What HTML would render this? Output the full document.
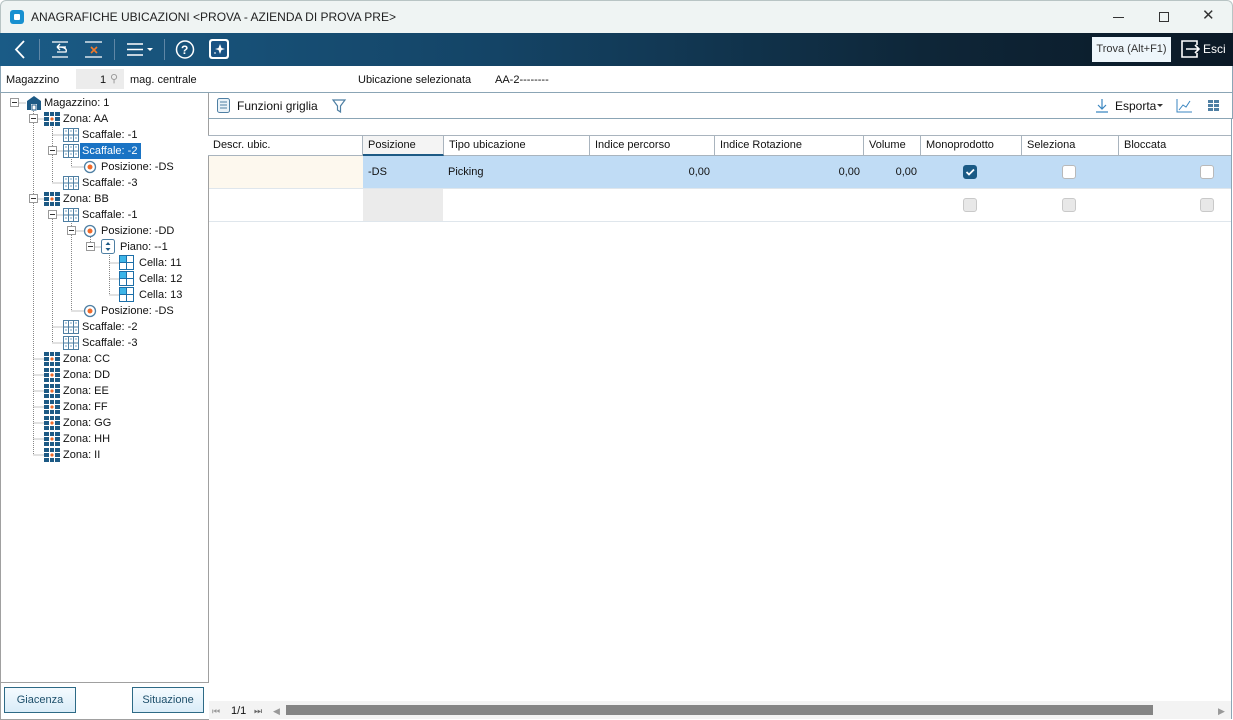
<!DOCTYPE html>
<html><head><meta charset="utf-8"><style>
*{box-sizing:border-box;margin:0;padding:0}
body{width:1233px;height:720px;overflow:hidden;font-family:"Liberation Sans","DejaVu Sans",sans-serif;font-size:11px;color:#111;background:#fff;position:relative}
.a{position:absolute}
.t{position:absolute;white-space:nowrap;line-height:16px}
#title{left:0;top:0;width:1233px;height:33px;background:#eff4f3;border:1px solid #b8c4c4;border-bottom:none;border-radius:6px 6px 0 0}
#tb{left:0;top:33px;width:1233px;height:33px;background:linear-gradient(90deg,#1a5b86 0%,#144466 40%,#0e2638 75%,#0b1926 100%)}
.sep{position:absolute;top:6px;width:1px;height:21px;background:#5f87a6}
.hd{position:absolute;top:135px;height:21px;border-right:1px solid #a9b4be;border-bottom:1px solid #a9b4be;background:#fff;padding:3px 5px;white-space:nowrap;border-top:1px solid #a9b4be}
.cb{position:absolute;width:14px;height:14px;border:1px solid #b9b9b9;border-radius:3px;background:#fff}
.cbd{background:#e8e8e8;border-color:#c9c9c9}
.btn{position:absolute;top:687px;height:26px;border:1px solid #2d6a86;background:linear-gradient(#f5fbff,#d9ecf8);color:#1d4f6b;text-align:center;line-height:24px;font-size:11px}
</style></head><body>
<div id="title" class="a">
 <div class="a" style="left:9px;top:9px;width:14px;height:14px;border-radius:3px;background:#1890d0"><div class="a" style="left:4px;top:4px;width:6px;height:6px;background:#fff;border-radius:1px"></div></div>
 <div class="t" style="left:30px;top:8px;font-size:12px;color:#222">ANAGRAFICHE UBICAZIONI &lt;PROVA - AZIENDA DI PROVA PRE&gt;</div>
 <div class="a" style="left:1112px;top:16px;width:11px;height:1px;background:#333"></div>
 <div class="a" style="left:1158px;top:11px;width:10px;height:10px;border:1px solid #333"></div>
 <div class="t" style="left:1201px;top:7px;font-size:15px;color:#333">✕</div>
</div>
<div id="tb" class="a">
 <svg class="a" style="left:0;top:0" width="240" height="33">
  <path d="M24 8 L16 16.5 L24 25" stroke="#fff" stroke-width="1.8" fill="none"/>
  <path d="M52 9 H68 M52 24 H68 M66 14 H57 M57 14 L60 11 M57 14 L60 17 M57 14 Q68 14 66 19 H57" stroke="#fff" stroke-width="1.3" fill="none"/>
  <path d="M85 9 H102 M85 24 H102" stroke="#fff" stroke-width="1.3"/>
  <path d="M91 14 L97 20 M97 14 L91 20" stroke="#f07a2a" stroke-width="1.6"/>
  <path d="M127 11 H143 M127 16.5 H143 M127 22 H143" stroke="#fff" stroke-width="1.6"/>
  <path d="M147 15 L153 15 L150 18Z" fill="#fff"/>
  <circle cx="185" cy="16.5" r="8.5" stroke="#fff" stroke-width="1.5" fill="none"/>
  <text x="181" y="21" fill="#fff" font-size="12" font-family="Liberation Sans" font-weight="bold">?</text>
  <rect x="209" y="6" width="20" height="20" rx="3" fill="#fff"/>
  <rect x="211" y="8" width="16" height="16" rx="2" fill="#1a5384"/>
  <path d="M220 11 L221.5 15 L225 16 L221.5 17 L220 21 L218.5 17 L215 16 L218.5 15Z M215 19 l1 1 -1 1 -1 -1z" fill="#fff"/>
 </svg>
 <div class="sep" style="left:39px"></div><div class="sep" style="left:114px"></div><div class="sep" style="left:164px"></div>
 <div class="a" style="left:1092px;top:4px;width:79px;height:25px;background:#eef6fb;color:#333;font-size:11px;line-height:25px;text-align:center">Trova (Alt+F1)</div>
 <svg class="a" style="left:1180px;top:6px" width="22" height="22"><path d="M9 2 H2 V18 H9 M9 2 H17 V6 M17 14 V18 H9" stroke="#fff" stroke-width="1.6" fill="none"/><path d="M6 10 H19 M15 6 L19 10 L15 14" stroke="#fff" stroke-width="1.6" fill="none"/></svg>
 <div class="t" style="left:1203px;top:8px;color:#fff;font-size:12px">Esci</div>
</div>
<div class="a" style="left:0;top:66px;width:1233px;height:27px;border:1px solid #8ba5b5;border-top:none;background:#fff"></div>
<div class="t" style="left:6px;top:72px">Magazzino</div>
<div class="a" style="left:76px;top:69px;width:48px;height:20px;background:#ececec"></div>
<div class="t" style="left:100px;top:72px">1</div>
<div class="t" style="left:110px;top:71px;color:#999">⚲</div>
<div class="t" style="left:130px;top:72px">mag. centrale</div>
<div class="t" style="left:358px;top:72px">Ubicazione selezionata</div>
<div class="t" style="left:495px;top:72px">AA-2--------</div>

<div class="a" style="left:0;top:93px;width:209px;height:590px;border:1px solid #a0a0a0;border-top:none;background:#fff"></div>
<svg class="a" style="left:0;top:93px" width="208" height="380">
 <g stroke="#888" stroke-dasharray="1,1" fill="none">
  <path d="M14.5 10 H26 M33.5 16 V362 M33.5 26 H44 M33.5 106 H44"/>
  <path d="M52.5 32 V90 M52.5 42 H63 M52.5 58 H63 M52.5 90 H63 M71.5 64 V74 M71.5 74 H84"/>
  <path d="M52.5 122 V250 M52.5 122 H63 M52.5 234 H63 M52.5 250 H63 M71.5 128 V218 M71.5 138 H84 M71.5 218 H84 M90.5 144 V154 M90.5 154 H101 M109.5 160 V202 M109.5 170 H119 M109.5 186 H119 M109.5 202 H119"/>
  <path d="M33.5 266 H44 M33.5 282 H44 M33.5 298 H44 M33.5 314 H44 M33.5 330 H44 M33.5 346 H44 M33.5 362 H44"/>
 </g>
 <defs>
  <g id="pm"><rect x="0.5" y="0.5" width="8" height="8" fill="#fff" stroke="#999"/><path d="M2 4.5 H7" stroke="#333"/></g>
  <g id="zo"><g fill="#1d5a85"><rect x="0" y="0" width="5" height="4"/><rect x="6" y="0" width="4" height="4"/><rect x="11" y="0" width="5" height="4"/><rect x="0" y="5" width="5" height="4"/><rect x="11" y="5" width="5" height="4"/><rect x="0" y="10" width="5" height="4"/><rect x="6" y="10" width="4" height="4"/><rect x="11" y="10" width="5" height="4"/></g><circle cx="8" cy="7" r="1.6" fill="#f06a2a"/></g>
  <g id="sc" fill="none" stroke="#4e7fa3"><rect x="0.5" y="0.5" width="15" height="13"/><path d="M0.5 7 H15.5 M5.5 0.5 V13.5 M10.5 0.5 V13.5"/><path d="M2 3 H4 M7 3 H9 M12 3 H14 M2 10 H4 M7 10 H9 M12 10 H14" stroke="#7aa6c4"/></g>
  <g id="po"><circle cx="7" cy="7" r="5.5" fill="#fff" stroke="#4e7fa3" stroke-width="1.3"/><circle cx="7" cy="7" r="2.5" fill="#f06a2a"/></g>
  <g id="ce"><rect x="0.5" y="0.5" width="14" height="14" fill="#fff" stroke="#1d6fa8"/><rect x="1" y="1" width="6" height="6" fill="#3db5e8"/><path d="M0.5 7.5 H14.5 M7.5 0.5 V14.5" stroke="#1d6fa8"/></g>
 </defs>
 <use href="#pm" x="10" y="5"/>
 <g transform="translate(26,3)"><path d="M1 5 L8 0 L15 5 V14 H11 V8 H5 V14 H1Z" fill="#1d5a85"/><rect x="6" y="9" width="4" height="5" fill="#fff" stroke="#1d5a85"/></g>
 <use href="#pm" x="29" y="21"/><use href="#zo" x="44" y="19"/>
 <use href="#sc" x="63" y="35"/>
 <use href="#pm" x="48" y="53"/>
 <rect x="80" y="50" width="61" height="16" fill="#1a73c4"/>
 <use href="#sc" x="63" y="51"/>
 <use href="#po" x="83" y="67"/>
 <use href="#sc" x="63" y="83"/>
 <use href="#pm" x="29" y="101"/><use href="#zo" x="44" y="99"/>
 <use href="#pm" x="48" y="117"/><use href="#sc" x="63" y="115"/>
 <use href="#pm" x="67" y="133"/><use href="#po" x="83" y="131"/>
 <use href="#pm" x="86" y="149"/>
 <g transform="translate(101,146)"><rect x="0.5" y="0.5" width="13" height="14" rx="2" fill="#fff" stroke="#4e7fa3"/><path d="M7 3 L9.5 6 H4.5Z M7 12 L9.5 9 H4.5Z" fill="#1d5a85"/></g>
 <use href="#ce" x="119" y="162"/><use href="#ce" x="119" y="178"/><use href="#ce" x="119" y="194"/>
 <use href="#po" x="83" y="211"/>
 <use href="#sc" x="63" y="227"/><use href="#sc" x="63" y="243"/>
 <use href="#zo" x="44" y="259"/><use href="#zo" x="44" y="275"/><use href="#zo" x="44" y="291"/><use href="#zo" x="44" y="307"/><use href="#zo" x="44" y="323"/><use href="#zo" x="44" y="339"/><use href="#zo" x="44" y="355"/>
</svg>
<div class="t" style="left:44px;top:95px">Magazzino: 1</div>
<div class="t" style="left:63px;top:111px">Zona: AA</div>
<div class="t" style="left:82px;top:127px">Scaffale: -1</div>
<div class="t" style="left:82px;top:143px;color:#fff">Scaffale: -2</div>
<div class="t" style="left:101px;top:159px">Posizione: -DS</div>
<div class="t" style="left:82px;top:175px">Scaffale: -3</div>
<div class="t" style="left:63px;top:191px">Zona: BB</div>
<div class="t" style="left:82px;top:207px">Scaffale: -1</div>
<div class="t" style="left:101px;top:223px">Posizione: -DD</div>
<div class="t" style="left:120px;top:239px">Piano: --1</div>
<div class="t" style="left:139px;top:255px">Cella: 11</div>
<div class="t" style="left:139px;top:271px">Cella: 12</div>
<div class="t" style="left:139px;top:287px">Cella: 13</div>
<div class="t" style="left:101px;top:303px">Posizione: -DS</div>
<div class="t" style="left:82px;top:319px">Scaffale: -2</div>
<div class="t" style="left:82px;top:335px">Scaffale: -3</div>
<div class="t" style="left:63px;top:351px">Zona: CC</div>
<div class="t" style="left:63px;top:367px">Zona: DD</div>
<div class="t" style="left:63px;top:383px">Zona: EE</div>
<div class="t" style="left:63px;top:399px">Zona: FF</div>
<div class="t" style="left:63px;top:415px">Zona: GG</div>
<div class="t" style="left:63px;top:431px">Zona: HH</div>
<div class="t" style="left:63px;top:447px">Zona: II</div>
<div class="btn" style="left:4px;width:72px">Giacenza</div>
<div class="btn" style="left:132px;width:72px">Situazione</div>
<div class="a" style="left:0;top:683px;width:209px;height:37px;border-left:1px solid #a0a0a0;border-bottom:1px solid #a0a0a0"></div>

<div class="a" style="left:208px;top:93px;width:1025px;height:26px;border-bottom:1px solid #8ba5b5;border-right:1px solid #8ba5b5"></div>
<svg class="a" style="left:216px;top:97px" width="140" height="18"><rect x="1.5" y="1.5" width="12" height="14" rx="2" fill="#eaf3f9" stroke="#4e7fa3"/><path d="M4 5 H11 M4 8 H11 M4 11 H11" stroke="#4e7fa3"/><path d="M117 3 H129 L124.5 9 V15 L121.5 13 V9Z" fill="none" stroke="#4e7fa3" stroke-width="1.2"/></svg>
<div class="t" style="left:237px;top:98px;font-size:12px">Funzioni griglia</div>
<svg class="a" style="left:1094px;top:97px" width="140" height="18"><path d="M8 2 V12 M4 8 L8 12 L12 8 M2 15 H14" stroke="#3a86c0" stroke-width="1.2" fill="none"/><path d="M83 2 V15 H98 M85 13 L89 8 L92 10 L96 4" stroke="#3a86c0" fill="none"/><g fill="#4e7fa3"><rect x="114" y="3" width="5" height="3"/><rect x="120" y="3" width="5" height="3"/><rect x="114" y="7" width="5" height="3"/><rect x="120" y="7" width="5" height="3"/><rect x="114" y="11" width="5" height="3"/><rect x="120" y="11" width="5" height="3"/></g><path d="M63 7 L69 7 L66 10Z" fill="#333"/></svg>
<div class="t" style="left:1115px;top:98px;font-size:12px">Esporta</div>

<div class="hd" style="left:208px;width:155px">Descr. ubic.</div>
<div class="hd" style="left:363px;width:81px;background:#f4f4f4;border-bottom:2px solid #1d5a85">Posizione</div>
<div class="hd" style="left:444px;width:146px">Tipo ubicazione</div>
<div class="hd" style="left:590px;width:125px">Indice percorso</div>
<div class="hd" style="left:715px;width:149px">Indice Rotazione</div>
<div class="hd" style="left:864px;width:57px">Volume</div>
<div class="hd" style="left:921px;width:101px">Monoprodotto</div>
<div class="hd" style="left:1022px;width:97px">Seleziona</div>
<div class="hd" style="left:1119px;width:113px">Bloccata</div>

<div class="a" style="left:209px;top:156px;width:154px;height:33px;background:#fdf8ee"></div>
<div class="a" style="left:363px;top:156px;width:869px;height:33px;background:#c0dcf5"></div>
<div class="a" style="left:209px;top:188px;width:1023px;height:1px;background:#dfe6ec"></div>
<div class="a" style="left:363px;top:189px;width:80px;height:32px;background:#ebebeb"></div>
<div class="a" style="left:209px;top:221px;width:1023px;height:1px;background:#dfe6ec"></div>
<div class="t" style="left:368px;top:164px">-DS</div>
<div class="t" style="left:448px;top:164px">Picking</div>
<div class="t" style="left:600px;top:164px;width:110px;text-align:right">0,00</div>
<div class="t" style="left:740px;top:164px;width:120px;text-align:right">0,00</div>
<div class="t" style="left:866px;top:164px;width:51px;text-align:right">0,00</div>
<div class="cb" style="left:963px;top:165px;background:#1a5a85;border-color:#1a5a85"><svg width="12" height="12" style="position:absolute;left:0;top:0"><path d="M2.5 6 L5 8.5 L10 3.5" stroke="#fff" stroke-width="1.8" fill="none"/></svg></div>
<div class="cb" style="left:1062px;top:165px"></div>
<div class="cb" style="left:1200px;top:165px"></div>
<div class="cb cbd" style="left:963px;top:198px"></div>
<div class="cb cbd" style="left:1062px;top:198px"></div>
<div class="cb cbd" style="left:1200px;top:198px"></div>
<div class="a" style="left:1231px;top:119px;width:1px;height:600px;background:#8ba5b5"></div>

<div class="a" style="left:209px;top:701px;width:1022px;height:18px;background:#f3f3f3"></div>
<div class="t" style="left:212px;top:703px;color:#999;font-size:9px">⏮</div>
<div class="t" style="left:231px;top:703px">1/1</div>
<div class="t" style="left:254px;top:703px;color:#666;font-size:9px">⏭</div>
<div class="t" style="left:273px;top:703px;color:#999;font-size:9px">◀</div>
<div class="a" style="left:286px;top:705px;width:867px;height:10px;background:#858585"></div>
<div class="t" style="left:1218px;top:703px;color:#999;font-size:9px">▶</div>
</body></html>
